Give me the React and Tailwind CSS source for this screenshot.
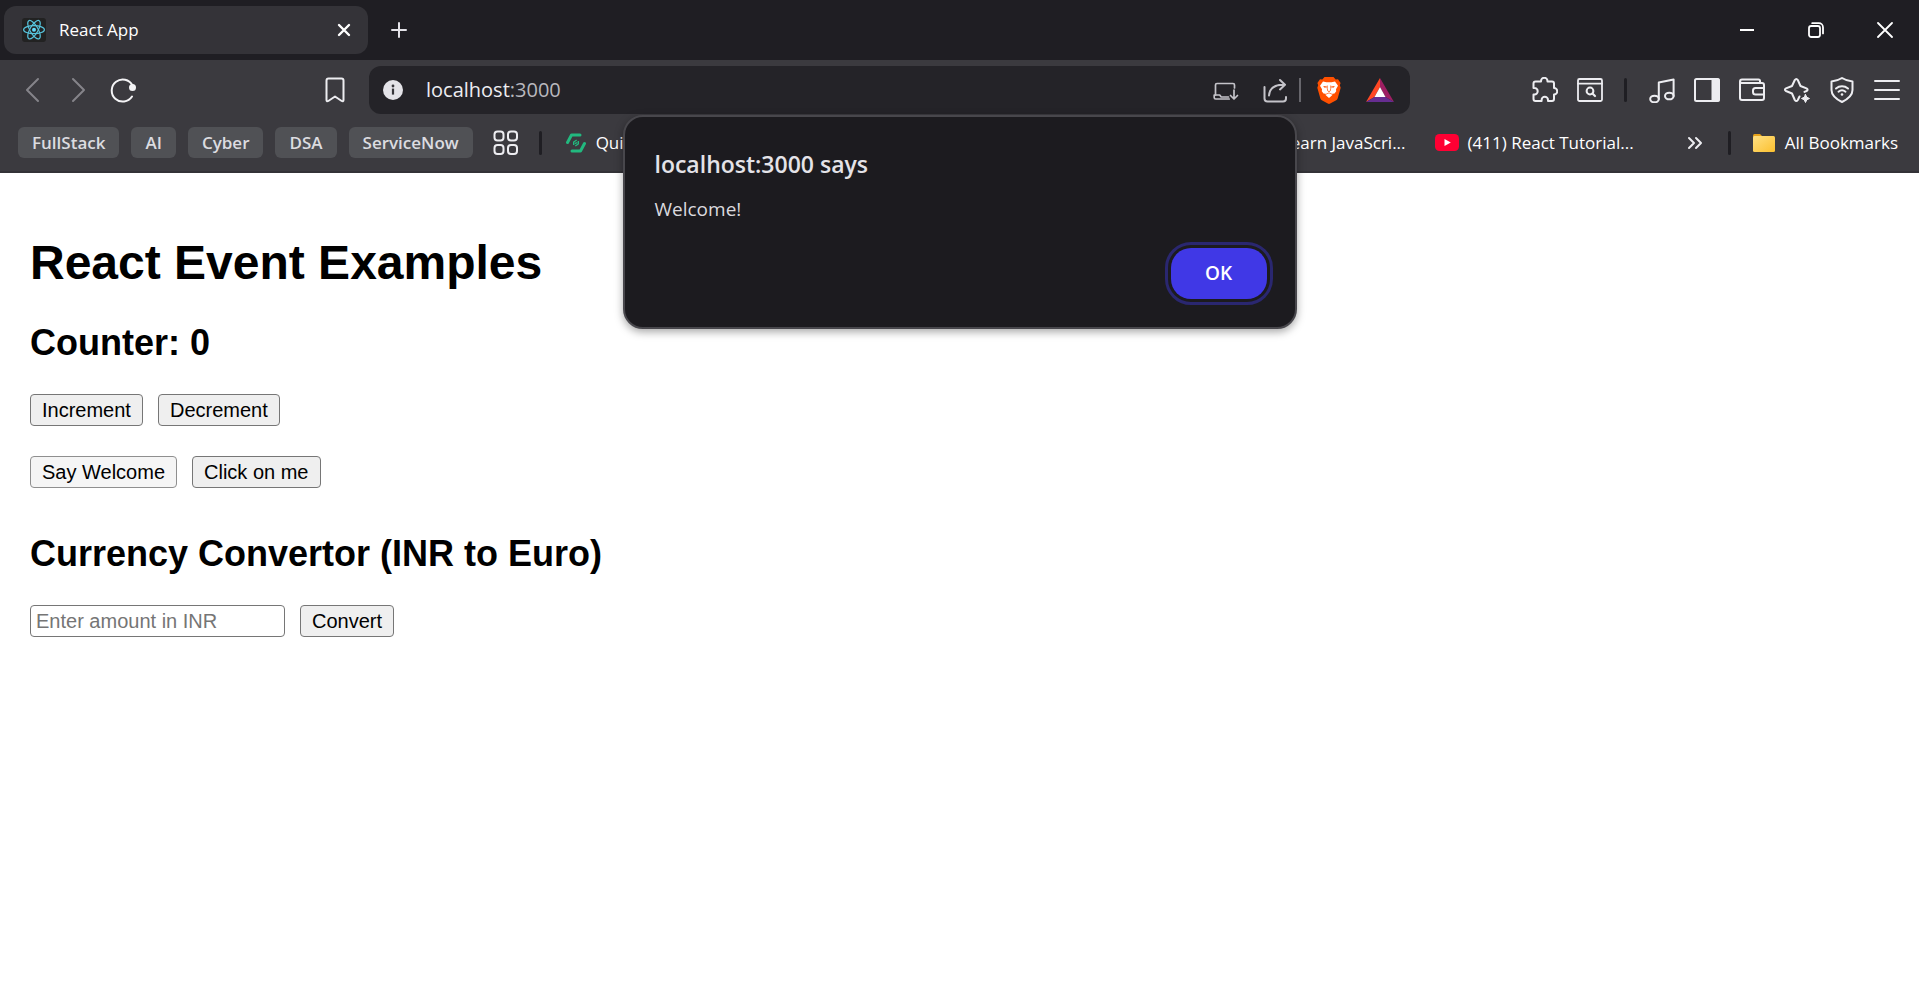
function Icon({ size = 26, stroke = 2, className = "text-[#ededf1]", children }) {
  return (
    <svg
      width={size}
      height={size}
      viewBox={`0 0 ${size} ${size}`}
      fill="none"
      stroke="currentColor"
      strokeWidth={stroke}
      strokeLinecap="round"
      strokeLinejoin="round"
      className={`block shrink-0 ${className}`}
      aria-hidden="true"
    >
      {children}
    </svg>
  );
}

function IconButton({ label, className = "w-[45px]", children }) {
  return (
    <button type="button" aria-label={label} className={`flex h-9 shrink-0 items-center justify-center ${className}`}>
      {children}
    </button>
  );
}

function Divider({ className = "" }) {
  return <span className={`h-6 w-[3px] shrink-0 rounded-full bg-[#1f1e23] ${className}`} />;
}

function ReactLogo() {
  return (
    <svg width="24" height="24" viewBox="0 0 24 24" className="block shrink-0" aria-hidden="true">
      <rect width="24" height="24" rx="3" fill="#222222" />
      <g fill="none" stroke="#57c4dd" strokeWidth="1.2">
        <ellipse cx="12" cy="11.7" rx="10.4" ry="4" />
        <ellipse cx="12" cy="11.7" rx="10.4" ry="4" transform="rotate(60 12 11.7)" />
        <ellipse cx="12" cy="11.7" rx="10.4" ry="4" transform="rotate(120 12 11.7)" />
      </g>
      <circle cx="12" cy="11.7" r="2" fill="#61dafb" />
    </svg>
  );
}

function BraveLogo() {
  return (
    <svg width="24" height="27" viewBox="0 0 24 27" className="block" aria-hidden="true">
      <path
        d="M7.500 0h9l2.200 2.400 2.300-.2L23.600 6l-.8 2.200.9 2.500-3 10.500q-.4 1.300-1.500 2L13.200 26.500q-1.200.8-2.400 0L4.800 23.200q-1.100-.7-1.500-2L.3 10.700l.9-2.500L.4 6 3 2.200l2.300.2z"
        fill="#ff5000"
      />
      <path
        d="M6 4.500l3.500.7h5l3.500-.7 3 4.300-2 3.400.2 2-1.700 2.300-2.200.2-.1 1.500L12 21l-3.200-2.800-.1-1.500-2.200-.2-1.700-2.300.2-2-2-3.400z"
        fill="#ffffff"
      />
      <path d="M6.300 9l3.600.6-.2 1-2.600-.2zM17.700 9l-3.600.6.2 1 2.600-.2z" fill="#ff5000" />
      <path
        d="M10.300 8.500v3.200l.5 2.300 1.200.8 1.200-.8.5-2.300V8.500M9 17.200l3-1.300 3 1.300"
        fill="none"
        stroke="#ff5000"
        strokeWidth=".7"
      />
    </svg>
  );
}

function TabStrip() {
  return (
    <div className="flex h-[60px] items-center bg-[#1f1e23] pl-1 text-white">
      <div className="flex h-12 w-[364px] items-center rounded-xl bg-[#343338] pr-2 pl-[18px]">
        <ReactLogo />
        <span className="ml-[13px] flex-1 text-[17px]">React App</span>
        <IconButton label="Close tab" className="w-8">
          <Icon size={14} stroke={2.4} className="text-white">
            <path d="M2 2l10 10M12 2L2 12" />
          </Icon>
        </IconButton>
      </div>
      <IconButton label="New tab" className="ml-3 w-[38px]">
        <Icon size={16} className="text-[#e4e3e8]">
          <path d="M8 1v14M1 8h14" />
        </Icon>
      </IconButton>
      <div className="ml-auto flex">
        <IconButton label="Minimize" className="w-[69px]">
          <Icon size={16} className="text-white">
            <path d="M1 8h14" strokeLinecap="butt" />
          </Icon>
        </IconButton>
        <IconButton label="Restore" className="w-[69px]">
          <Icon size={16} stroke={1.8} className="text-white">
            <rect x="1" y="4" width="11" height="11" rx="2.2" />
            <path d="M4.2 1.2h6.6a4.2 4.2 0 0 1 4.2 4.2v6" />
          </Icon>
        </IconButton>
        <IconButton label="Close" className="w-[69px]">
          <Icon size={16} stroke={1.8} className="text-white">
            <path d="M1 1l14 14M15 1L1 15" />
          </Icon>
        </IconButton>
      </div>
    </div>
  );
}

function AddressBar() {
  return (
    <div className="mr-[112px] ml-[10px] flex h-12 flex-1 items-center rounded-xl bg-[#242328] pl-[14px] pr-2">
      <svg width="20" height="20" viewBox="0 0 20 20" className="block shrink-0" aria-hidden="true">
        <circle cx="10" cy="10" r="10" fill="#e4e3e8" />
        <path d="M10 8.6v6" stroke="#36353a" strokeWidth="2.2" />
        <circle cx="10" cy="6" r="1.4" fill="#36353a" />
      </svg>
      <span className="ml-[23px] flex-1 text-[20px] leading-[30px] text-[#ededf1]">
        localhost<span className="text-[#b9b8be]">:3000</span>
      </span>
      <IconButton label="Install app" className="w-[50px]">
        <Icon size={26} stroke={1.7} className="text-[#c4c3c9]">
          <path d="M2.500 18V8q0-1.500 1.500-1.500h16q1.500 0 1.500 1.500v3" />
          <path d="M1.200 18h5.500l1.500 2H15.500M1.200 18v2.500q0 1.500 1.500 1.500h13.500" />
          <path d="M21 13v8.500M17.500 18.500l3.500 3.500 3.500-3.500" />
        </Icon>
      </IconButton>
      <IconButton label="Share" className="w-12">
        <Icon size={26} className="text-[#c4c3c9]">
          <path d="M2.500 10v11.500q0 3 3 3h15.500q3 0 3-3V20" />
          <path d="M7 18.500C7.500 12 12 7.700 21.500 7.700M18 3l5 4.700-5 4.700" />
        </Icon>
      </IconButton>
      <span className="h-6 w-[2px] shrink-0 bg-[#67666c]" />
      <IconButton label="Brave Shields" className="w-14">
        <BraveLogo />
      </IconButton>
      <IconButton label="Brave Rewards">
        <svg width="28" height="24" viewBox="0 0 28 24" className="block" aria-hidden="true">
          <path d="M14 0L0 24l8.500-5L14 9z" fill="#ff4724" />
          <path d="M14 0l14 24-8.500-5L14 9z" fill="#9e1f63" />
          <path d="M0 24h28l-8.500-5h-11z" fill="#662d91" />
          <path d="M14 9l5.500 10h-11z" fill="#ffffff" />
        </svg>
      </IconButton>
    </div>
  );
}

function Toolbar() {
  return (
    <div className="flex h-[60px] items-center pr-[10px] pl-[10px]">
      <IconButton label="Back">
        <Icon className="text-[#85848a]">
          <path d="M18 2L7 13l11 11" />
        </Icon>
      </IconButton>
      <IconButton label="Forward">
        <Icon className="text-[#85848a]">
          <path d="M8 2l11 11L8 24" />
        </Icon>
      </IconButton>
      <IconButton label="Reload">
        <Icon className="text-[#f4f4f6]">
          <path d="M22 19.500A11 11 0 1 1 22.500 8.500" />
          <circle cx="22.500" cy="10.500" r="2.500" fill="currentColor" />
        </Icon>
      </IconButton>
      <IconButton label="Bookmark this page" className="ml-[165px] w-[49px]">
        <Icon>
          <path d="M4.500 23V3.500Q4.500 1.500 6.500 1.500h13q2 0 2 2V23q0 2-1.800 1L13 19.500 6.300 24q-1.800 1-1.800-1z" />
        </Icon>
      </IconButton>
      <AddressBar />
      <IconButton label="Extensions">
        <Icon>
          <path d="M3.500 4.500H9V4a3 3 0 0 1 6.500 0v.5H20q2 0 2 2V11a3 3 0 0 1 0 6.500V22q0 2-2 2h-4v-1a3.200 3.200 0 0 0-6.400 0v1H3.500q-2 0-2-2v-4.500H2.500a3.200 3.200 0 0 0 0-6.400h-1V6.500q0-2 2-2z" />
        </Icon>
      </IconButton>
      <IconButton label="Search in page">
        <Icon stroke={1.8}>
          <rect x="1" y="2" width="24" height="22" rx="1.500" />
          <path d="M1 6.700h24" />
          <circle cx="13" cy="14" r="3.400" strokeWidth="2" />
          <path d="M15.500 16.500l2.500 2.500" strokeWidth="2.200" />
        </Icon>
      </IconButton>
      <Divider className="mx-3" />
      <IconButton label="Media">
        <Icon>
          <ellipse cx="5.500" cy="22" rx="4.300" ry="3.300" />
          <ellipse cx="20.300" cy="19" rx="4.300" ry="3.300" />
          <path d="M9.800 22V5.500L24.600 2.500V19" />
        </Icon>
      </IconButton>
      <IconButton label="Sidebar">
        <Icon>
          <rect x="1" y="2" width="24" height="22" rx="1.500" />
          <path d="M18.500 2.500H24.500V23.500H18.500z" fill="currentColor" />
        </Icon>
      </IconButton>
      <IconButton label="Wallet">
        <Icon>
          <path d="M21 6V4q0-1.500-1.500-1.500H3Q1 2.500 1 4.500V21q0 2 2 2h20q2 0 2-2V8q0-2-2-2H3Q1.200 6 1 4.500" />
          <path d="M25 11h-8.500q-2.500 0-2.500 2.500v1.500q0 2.500 2.500 2.500H25" />
        </Icon>
      </IconButton>
      <IconButton label="Leo AI">
        <Icon>
          <path d="M15.500 19.500l-1.700 3.500q-1.500 2.200-3 0L8 16.500 2 14q-2.200-1.200 0-2.600L8 9l2.800-6q1.500-2.200 3 0l2.700 6 6 2.400q2.200 1.400 0 2.600l-2 .9" />
          <path d="M21.500 17.500l1.300 2.700 2.700 1.300-2.700 1.300-1.300 2.700-1.300-2.700-2.700-1.300 2.700-1.300z" fill="currentColor" strokeWidth="1" />
        </Icon>
      </IconButton>
      <IconButton label="VPN">
        <Icon>
          <path d="M13 1C10 3 6.500 4 2.500 4.500V13c0 5 4.500 9 10.500 12 6-3 10.500-7 10.500-12V4.500C19.500 4 16 3 13 1z" />
          <path d="M7 11.500c3.500-3 8.500-3 12 0M9.500 14.700c2-1.700 5-1.700 7 0" />
          <circle cx="13" cy="17.500" r="1.300" fill="currentColor" stroke="none" />
        </Icon>
      </IconButton>
      <IconButton label="Menu">
        <Icon>
          <path d="M1 4h24M1 13h24M1 22h24" />
        </Icon>
      </IconButton>
    </div>
  );
}

const folders = ["FullStack", "AI", "Cyber", "DSA", "ServiceNow"];

function BookmarksBar() {
  return (
    <nav aria-label="Bookmarks" className="flex h-[53px] items-start border-b-2 border-[#333237] pt-[7px] pr-[21px] pl-[18px] text-white">
      <div className="flex h-[31px] flex-1 items-center whitespace-nowrap">
        <div className="flex gap-3">
          {folders.map((name) => (
            <button
              key={name}
              type="button"
              className="h-[31px] rounded-md bg-[#505155] px-[14px] text-[17px] leading-6 font-semibold text-[#dcdce0]"
            >
              {name}
            </button>
          ))}
        </div>
        <IconButton label="Bookmark groups" className="ml-5 w-[26px]">
          <Icon size={26}>
            <rect x="1.500" y="1.500" width="9" height="9" rx="3" />
            <rect x="15" y="1.500" width="9" height="9" rx="3" />
            <rect x="1.500" y="15" width="9" height="9" rx="3" />
            <rect x="15" y="15" width="9" height="9" rx="3" />
          </Icon>
        </IconButton>
        <Divider className="ml-5" />
        <a href="#quick" className="ml-6 flex items-center gap-[10px] text-[17px]">
          <svg width="20" height="20" viewBox="0 0 20 20" fill="none" stroke="#22b97f" className="block" aria-hidden="true">
            <path d="M1.500 9.500L5.500 2H14" strokeWidth="3" strokeLinecap="round" strokeLinejoin="round" />
            <path d="M18.500 10.500l-4 7.500H6" strokeWidth="3" strokeLinecap="round" strokeLinejoin="round" />
            <path d="M7.700 12V9l3-2M12.300 8v3l-3 2M9 10.700l2-1.200" strokeWidth="1.400" />
          </svg>
          Qui
        </a>
      </div>
      <div className="flex h-[31px] items-center text-[17px] whitespace-nowrap">
        <a href="#javascript">Learn JavaScri...</a>
        <a href="#react" className="ml-[29px] flex items-center gap-[9px]">
          <svg width="24" height="17" viewBox="0 0 24 17" className="block" aria-hidden="true">
            <rect width="24" height="17" rx="4.500" fill="#ff0033" />
            <path d="M9.500 5v7l6.300-3.500z" fill="#ffffff" />
          </svg>
          (411) React Tutorial...
        </a>
        <IconButton label="More bookmarks" className="ml-[53px] w-4">
          <Icon size={16} stroke={2}>
            <path d="M2 3l5 5-5 5M9 3l5 5-5 5" />
          </Icon>
        </IconButton>
        <Divider className="ml-[25px]" />
        <a href="#all" className="ml-[21px] flex items-center gap-[9px]">
          <svg width="24" height="20" viewBox="0 0 24 20" className="block" aria-hidden="true">
            <defs>
              <linearGradient id="folder" x1="0" y1="0" x2="1" y2="1">
                <stop offset="0" stopColor="#ffe083" />
                <stop offset="1" stopColor="#fbc02f" />
              </linearGradient>
            </defs>
            <path d="M1 2.500Q1 1 2.500 1H8l2 2v3H1z" fill="#e5a11a" />
            <rect x="1" y="3" width="22" height="16" rx="1.500" fill="url(#folder)" />
          </svg>
          All Bookmarks
        </a>
      </div>
    </nav>
  );
}

function AlertDialog() {
  return (
    <div
      role="alertdialog"
      aria-labelledby="alert-title"
      aria-describedby="alert-text"
      className="absolute top-[115px] left-1/2 w-[674px] -translate-x-1/2 rounded-[20px] border-2 border-[#48474c] bg-[#1c1b1f] px-[28px] pt-[29px] pb-7 text-[#e4e3e8] shadow-[0_3px_8px_rgba(0,0,0,0.35)]"
    >
      <h2 id="alert-title" className="pl-[2px] text-[23px] leading-9 font-semibold">
        localhost:3000 says
      </h2>
      <p id="alert-text" className="mt-[11px] pl-[2px] text-[19px] leading-8 text-[#dad9de]">
        Welcome!
      </p>
      <div className="flex justify-end pt-[23px]">
        <button
          type="button"
          className="h-[51px] w-24 rounded-[20px] bg-[#4038e6] text-[19px] font-semibold text-white outline-3 outline-offset-3 outline-[#2a2770]"
        >
          OK
        </button>
      </div>
    </div>
  );
}

function PlainButton({ className = "border-[#767676] bg-[#efefef]", children }) {
  return (
    <button type="button" className={`h-8 rounded-[4px] border px-[11px] text-[20px] leading-6 ${className}`}>
      {children}
    </button>
  );
}

function Page() {
  return (
    <main className="px-[30px] pt-[62px] font-['Liberation_Sans',Arial,sans-serif] text-black">
      <h1 className="text-[48px] leading-[55px] font-bold">React Event Examples</h1>
      <h2 className="mt-8 text-[36px] leading-[41px] font-bold">Counter: 0</h2>
      <div className="mt-[31px] flex gap-[15px]">
        <PlainButton>Increment</PlainButton>
        <PlainButton>Decrement</PlainButton>
      </div>
      <div className="mt-[30px] flex gap-[15px]">
        <PlainButton className="border-[#8f8f8f] bg-[#f5f5f5]">Say Welcome</PlainButton>
        <PlainButton>Click on me</PlainButton>
      </div>
      <h2 className="mt-[45px] text-[36px] leading-[41px] font-bold">Currency Convertor (INR to Euro)</h2>
      <form className="mt-[31px] flex gap-[15px]">
        <input
          type="text"
          aria-label="Amount in INR"
          placeholder="Enter amount in INR"
          className="h-8 w-[255px] rounded-[4px] border border-[#767676] bg-white px-[5px] text-[20px] placeholder:text-[#757575]"
        />
        <PlainButton>Convert</PlainButton>
      </form>
    </main>
  );
}

export default function App() {
  return (
    <div className="relative min-h-screen bg-white font-['Open_Sans','Noto_Sans',sans-serif]">
      <header className="bg-[#3b3a3f]">
        <TabStrip />
        <Toolbar />
        <BookmarksBar />
      </header>
      <Page />
      <AlertDialog />
    </div>
  );
}
